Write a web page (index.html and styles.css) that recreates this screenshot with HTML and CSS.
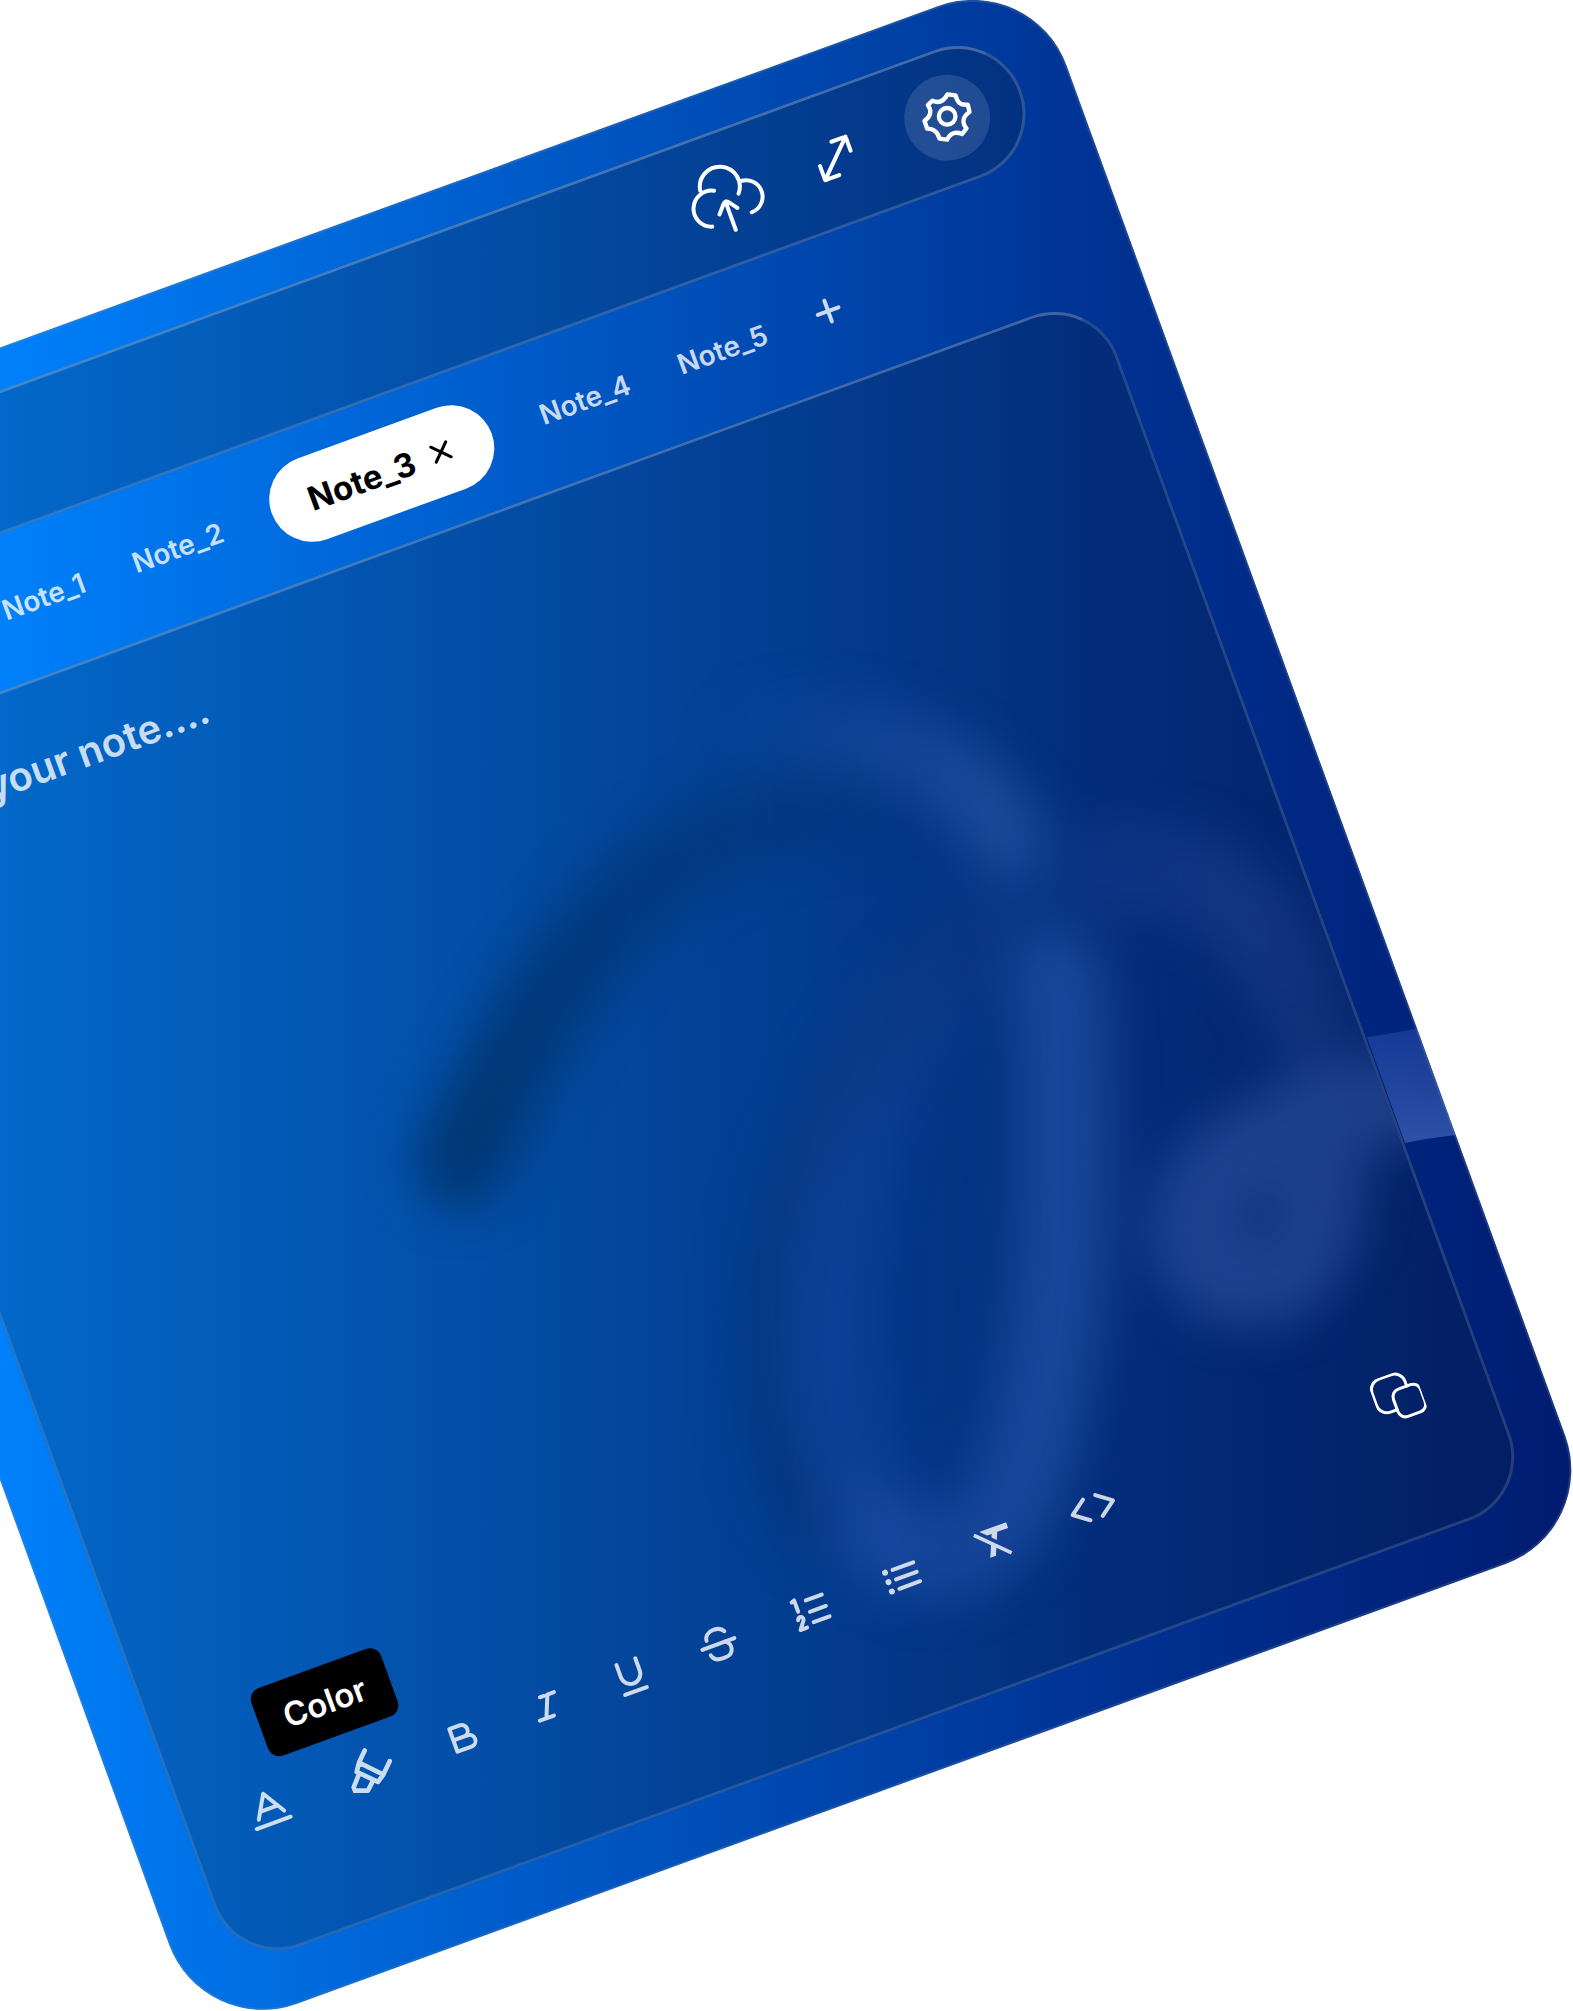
FILE: index.html
```html
<!DOCTYPE html>
<html lang="en">
<head>
<meta charset="utf-8">
<meta name="viewport" content="width=device-width, initial-scale=1">
<title>Notes</title>
<link rel="stylesheet" href="styles.css">
</head>
<body>
<main class="stage">
  <section class="card" aria-label="Notes">
    <svg class="strip" aria-hidden="true">
      <defs>
        <linearGradient id="strip" x1="0" y1="0" x2="0" y2="1">
          <stop offset="0" stop-color="#4068c8" stop-opacity=".32"/>
          <stop offset="1" stop-color="#6a8ce0" stop-opacity=".44"/>
        </linearGradient>
      </defs>
      <g transform="rotate(20) translate(364 -480)">
        <path fill="url(#strip)" d="M1367 1037 C1390 1034 1400 1031 1430 1027 L1480 1133 C1450 1135 1430 1138 1405 1143 Z"/>
      </g>
    </svg>

    <header class="topbar">
      <button class="icon-button" type="button" aria-label="Upload">
        <svg class="cloud" viewBox="0 0 84 80" aria-hidden="true">
          <path d="M22 24A20 20 0 1 1 57 40M35 29A18 18 0 1 0 21 62M63 29A16 16 0 1 1 63 62M42 73V43M32 53L39 45Q42 41 45 45L51 53"/>
        </svg>
      </button>
      <button class="icon-button" type="button" aria-label="Expand">
        <svg class="expand" viewBox="-24 -24 48 48" aria-hidden="true">
          <path d="M17 -17L-17 17M2 -17H14Q18 -17 17 -13V-2M-17 2V14Q-18 18 -14 17H-2"/>
        </svg>
      </button>
      <button class="icon-button round" type="button" aria-label="Settings">
        <svg class="gear" viewBox="-129 -129 258 258" aria-hidden="true">
          <g transform="rotate(20)">
            <path d="M1 -70L25 -67C31 -47 37 -37 62 -39L67 -17C47 -4 43 14 58 32L45 49C26 41 9 45 0 66L-23 63C-28 44 -38 33 -60 33L-68 9C-49 -4 -45 -20 -58 -38L-44 -51C-26 -43 -10 -49 1 -70Z"/>
            <circle cx="0" cy="-4" r="25"/>
          </g>
        </svg>
      </button>
    </header>

    <nav class="tabs" aria-label="Open notes">
      <button class="tab" type="button">Note_1</button>
      <button class="tab" type="button">Note_2</button>
      <button class="tab active" type="button">Note_3
        <svg class="close" viewBox="-10 -10 20 20" aria-hidden="true"><path d="M-8 -8L8 8M8 -8L-8 8"/></svg>
      </button>
      <button class="tab" type="button">Note_4</button>
      <button class="tab" type="button">Note_5</button>
      <button class="add" type="button" aria-label="Add note">
        <svg viewBox="-14 -14 28 28" aria-hidden="true"><path d="M-11 0H11M0 -11V11"/></svg>
      </button>
    </nav>

    <section class="editor">
      <svg class="swirl" aria-hidden="true">
        <defs>
          <linearGradient id="arc-light" gradientUnits="userSpaceOnUse" x1="700" y1="0" x2="1010" y2="0">
            <stop offset="0" stop-color="#3c68c0" stop-opacity="0"/>
            <stop offset="1" stop-color="#4a78cc" stop-opacity=".36"/>
          </linearGradient>
          <linearGradient id="arc-dark" gradientUnits="userSpaceOnUse" x1="460" y1="0" x2="940" y2="0">
            <stop offset="0" stop-color="#002a58" stop-opacity=".66"/>
            <stop offset=".35" stop-color="#002a58" stop-opacity=".42"/>
            <stop offset="1" stop-color="#002a58" stop-opacity="0"/>
          </linearGradient>
          <linearGradient id="arch" gradientUnits="userSpaceOnUse" x1="780" y1="0" x2="1340" y2="0">
            <stop offset="0" stop-color="#2c5cc0" stop-opacity=".2"/>
            <stop offset=".5" stop-color="#2c54b0" stop-opacity=".16"/>
            <stop offset=".85" stop-color="#4464b0" stop-opacity=".26"/>
            <stop offset="1" stop-color="#4868b0" stop-opacity=".14"/>
          </linearGradient>
          <linearGradient id="limb" gradientUnits="userSpaceOnUse" x1="830" y1="0" x2="1040" y2="0">
            <stop offset="0" stop-color="#3462c0" stop-opacity=".2"/>
            <stop offset="1" stop-color="#3c6cc8" stop-opacity=".38"/>
          </linearGradient>
        </defs>
        <g class="swirl-art" transform="translate(-57 -325) rotate(20) translate(364 -480)">
          <path stroke="url(#arc-dark)" stroke-width="92" d="M460 1162C500 1080 560 960 640 890C720 824 800 790 900 806"/>
          <path stroke="url(#arc-light)" stroke-width="76" d="M740 736C830 724 946 736 1004 834"/>
          <path stroke="#002454" stroke-opacity=".26" stroke-width="64" d="M980 940C890 990 764 1160 764 1340C764 1430 786 1490 820 1530"/>
          <path stroke="url(#arch)" stroke-width="92" d="M880 1530C810 1440 810 1240 860 1110C910 980 1030 870 1134 868C1230 866 1286 950 1320 1040"/>
          <path stroke="url(#limb)" stroke-width="92" d="M1058 980C1070 1130 1064 1300 1038 1410C1012 1550 940 1590 870 1530"/>
          <path stroke="#5074c4" stroke-opacity=".34" stroke-width="88" d="M1410 1096C1350 1104 1270 1124 1222 1170C1174 1216 1190 1284 1256 1282C1310 1278 1318 1220 1322 1170"/>
        </g>
      </svg>
      <textarea class="note" aria-label="Note text" placeholder="Type your note...."></textarea>
      <div class="toolbar">
        <button class="tool color" type="button" aria-label="Color" aria-describedby="tip">
          <svg viewBox="-24 -24 48 48" aria-hidden="true"><path d="M-13 8L0 -15L14 8M-9 1H9M-18 16H18"/></svg>
          <span class="tooltip" id="tip" role="tooltip">Color</span>
        </button>
        <button class="tool highlight" type="button" aria-label="Highlight">
          <svg viewBox="-72 -72 144 144" aria-hidden="true"><g class="fine" transform="rotate(20)"><path d="M-18 -60L-35 -24L38 12L57 -28M-35 -24L-42 4L22 34L38 12M-34 8L-55 60H-8L8 28"/></g></svg>
        </button>
        <button class="tool bold" type="button" aria-label="Bold">
          <svg viewBox="-24 -24 48 48" aria-hidden="true"><path d="M-10 -12H1A6 6 0 0 1 1 0H-10M1 0H5A6 6 0 0 1 5 12H-10V-12"/></svg>
        </button>
        <button class="tool italic" type="button" aria-label="Italic">
          <svg viewBox="-24 -24 48 48" aria-hidden="true"><path d="M-4 -11H11M-12 11H3M4 -11L-5 11"/></svg>
        </button>
        <button class="tool underline" type="button" aria-label="Underline">
          <svg viewBox="-24 -24 48 48" aria-hidden="true"><path d="M-10 -15V-2A10 10 0 0 0 10 -2V-15M-12 16H11"/></svg>
        </button>
        <button class="tool strike" type="button" aria-label="Strikethrough">
          <svg viewBox="-24 -24 48 48" aria-hidden="true"><path d="M-17 0H17M-10 -7C-10 -12 -5 -15 0 -15C4 -15 8 -14 10 -10M7 0C14 4 12 15 2 15H-1C-7 15 -10 12 -11 8"/></svg>
        </button>
        <button class="tool ordered" type="button" aria-label="Numbered list">
          <svg viewBox="-24 -24 48 48" aria-hidden="true"><path d="M-1 -11H16M-1 1H16M-1 12H16M-15 -14L-12 -15V-3M-15 5C-13 1 -8 3 -10 7L-16 15H-9"/></svg>
        </button>
        <button class="tool bullets" type="button" aria-label="Bulleted list">
          <svg viewBox="-24 -24 48 48" aria-hidden="true"><path d="M-7 -10H15M-7 0H15M-7 10H15"/><g class="dots"><circle cx="-15" cy="-10" r="3"/><circle cx="-15" cy="0" r="3"/><circle cx="-15" cy="10" r="3"/></g></svg>
        </button>
        <button class="tool clear" type="button" aria-label="Clear formatting">
          <svg viewBox="0 1 24 24" aria-hidden="true"><path class="solid" d="M3.27 5L2 6.27l6.97 6.97L6.5 19h3l1.57-3.66L16.73 21 18 19.73 3.55 5.27 3.27 5zM6 5v.18L8.82 8h2.4l-.72 1.68 2.1 2.1L14.21 8H20V5H6z"/></svg>
        </button>
        <button class="tool code" type="button" aria-label="Code">
          <svg viewBox="-24 -24 48 48" aria-hidden="true"><path d="M-6 -11L-21 0L-6 11M7 -11L22 0L7 11"/></svg>
        </button>
        <button class="tool copy" type="button" aria-label="Copy">
          <svg viewBox="-24 -24 48 48" aria-hidden="true"><rect x="-5" y="-7" width="29" height="29" rx="8"/><path d="M12 -7V-12A11 11 0 0 0 1 -23H-12A11 11 0 0 0 -23 -12V1A11 11 0 0 0 -12 12H-5"/></svg>
        </button>
      </div>
    </section>
  </section>
</main>
</body>
</html>
```
FILE: styles.css
```css
* {
  box-sizing: border-box;
}

body {
  margin: 0;
  background: #fff;
  font-family: Inter, "Liberation Sans", sans-serif;
}

button {
  margin: 0;
  padding: 0;
  border: 0;
  background: none;
  color: inherit;
  font: inherit;
  cursor: pointer;
}

svg {
  display: block;
  fill: none;
  stroke: currentColor;
  stroke-linecap: round;
  stroke-linejoin: round;
}

.stage {
  overflow: hidden;
}

/* The card leans 20 degrees and runs off the left side of the stage. */
.card {
  position: relative;
  display: flex;
  flex-direction: column;
  width: calc(100% - 87px);
  min-height: 1658px;
  margin: 480px 0 -127px -364px;
  padding: 40px 51px 53px 55px;
  overflow: hidden;
  border-radius: 100px;
  background: linear-gradient(110deg, #0081fc 18%, #0051bc 52%, #003394 74%, #001a6e 100%);
  color: #fff;
  transform: rotate(-20deg);
  transform-origin: 0 0;
}

.card::after {
  content: "";
  position: absolute;
  inset: 0;
  border: 2px solid rgba(120, 140, 160, 0.25);
  border-radius: inherit;
  pointer-events: none;
}

.strip {
  position: absolute;
  inset: 0;
  width: 100%;
  height: 100%;
  stroke: none;
}

.topbar {
  display: flex;
  align-items: center;
  justify-content: flex-end;
  gap: 52px;
  padding: 22px 33px;
  border: 3px solid rgba(150, 170, 200, 0.3);
  border-top-color: rgba(160, 185, 215, 0.4);
  border-radius: 70px;
  background: rgba(12, 30, 48, 0.24);
}

.icon-button svg {
  stroke-width: 4;
}

.cloud {
  width: 84px;
  height: 80px;
}

.expand {
  width: 48px;
  height: 48px;
}

.round {
  border-radius: 50%;
  background: rgba(255, 255, 255, 0.12);
}

.icon-button .gear {
  width: 86px;
  height: 86px;
  stroke-width: 13;
}

.tabs {
  display: flex;
  align-items: center;
  gap: 52px;
  padding: 30px 0 31px 245px;
  color: rgba(255, 255, 255, 0.8);
  font-size: 28px;
  font-weight: 600;
  line-height: 32px;
}

.active {
  display: flex;
  align-items: center;
  gap: 18px;
  padding: 27px 44px 27px 40px;
  border-radius: 43px;
  background: #fff;
  color: #000;
  font-size: 33px;
  font-weight: 700;
}

.close {
  width: 20px;
  height: 20px;
  stroke-width: 3;
}

.add svg {
  width: 28px;
  height: 28px;
  stroke-width: 4;
}

.editor {
  position: relative;
  display: flex;
  flex: 1;
  flex-direction: column;
  overflow: hidden;
  border: 3px solid rgba(150, 170, 200, 0.24);
  border-top-color: rgba(160, 185, 215, 0.38);
  border-radius: 68px;
  background: rgba(12, 30, 48, 0.24);
}

.swirl {
  position: absolute;
  inset: 0;
  width: 100%;
  height: 100%;
  overflow: visible;
}

.swirl-art {
  filter: blur(24px);
}

.note {
  position: relative;
  flex: 1;
  width: 100%;
  padding: 60px;
  border: 0;
  outline: 0;
  resize: none;
  background: none;
  color: #fff;
  font: 600 40px/48px Inter, "Liberation Sans", sans-serif;
}

.note::placeholder {
  color: rgba(255, 255, 255, 0.8);
}

.toolbar {
  position: relative;
  display: flex;
  align-items: center;
  gap: 56px;
  padding: 0 66px 114px 55px;
  color: rgba(255, 255, 255, 0.8);
}

.tool {
  position: relative;
  display: flex;
  justify-content: center;
}

.tool svg {
  flex: none;
  width: 48px;
  height: 48px;
  stroke-width: 4;
}

.tool .fine {
  stroke-width: 14;
}

.dots,
.solid {
  fill: currentColor;
  stroke: none;
}

.color {
  width: 54px;
}

.highlight {
  width: 52px;
}

.bold {
  width: 32px;
}

.italic {
  width: 36px;
}

.underline {
  width: 30px;
}

.strike,
.bullets,
.clear {
  width: 44px;
}

.ordered {
  width: 40px;
}

.code {
  width: 48px;
}

.copy {
  margin-left: auto;
  color: #fff;
}

.copy svg {
  stroke-width: 3;
}

.tooltip {
  position: absolute;
  bottom: 68px;
  left: 47px;
  padding: 16px 26px;
  border-radius: 12px;
  background: #000;
  color: #fff;
  font-size: 33px;
  font-weight: 600;
  line-height: 40px;
}
```
